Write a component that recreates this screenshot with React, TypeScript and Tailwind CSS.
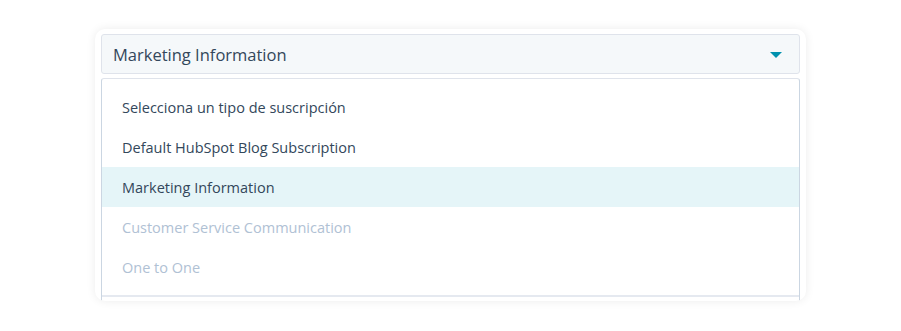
import React from "react";

const options = [
	{ label: "Selecciona un tipo de suscripción", disabled: false, selected: false },
	{ label: "Default HubSpot Blog Subscription", disabled: false, selected: false },
	{ label: "Marketing Information", disabled: false, selected: true },
	{ label: "Customer Service Communication", disabled: true, selected: false },
	{ label: "One to One", disabled: true, selected: false },
];

const App: React.FC = () => {
	return (
		<div className="w-[901px] h-[331px] bg-white pt-[29px] pl-[95px] font-['Open_Sans',sans-serif]">
			<div className="w-[711px] h-[272px] bg-white rounded-[10px] shadow-[0_0_10px_rgba(0,0,0,0.08)] px-[6px] pt-[5px] overflow-hidden">
				<button className="w-full h-[40px] flex items-center justify-between pl-[11px] pr-[16px] pt-[2px] bg-[#f5f8fa] border border-[#dfe3eb] rounded-[3px] text-[#33475b] text-[16.5px]">
					<span>Marketing Information</span>
					<svg width="12" height="6" viewBox="0 0 12 6" className="mr-[1px]">
						<path d="M0 0 H12 L6 6 Z" fill="#0091ae" />
					</svg>
				</button>
				<ul className="mt-[4px] border border-[#cbd6e2] border-t-[#dfe3eb] rounded-t-[3px] pt-[8px] pb-[8px] h-[240px]">
					{options.map((o) => (
						<li
							key={o.label}
							className={`h-[40px] flex items-center pl-[20px] pt-[1px] text-[14.5px] ${
								o.selected ? "bg-[#e5f5f8]" : ""
							} ${o.disabled ? "text-[#b0c1d4]" : "text-[#33475b]"}`}>
							{o.label}
						</li>
					))}
					<li className="border-t-2 border-[#e5e9f0] mt-[8px]" />
				</ul>
			</div>
		</div>
	);
};

export default App;
